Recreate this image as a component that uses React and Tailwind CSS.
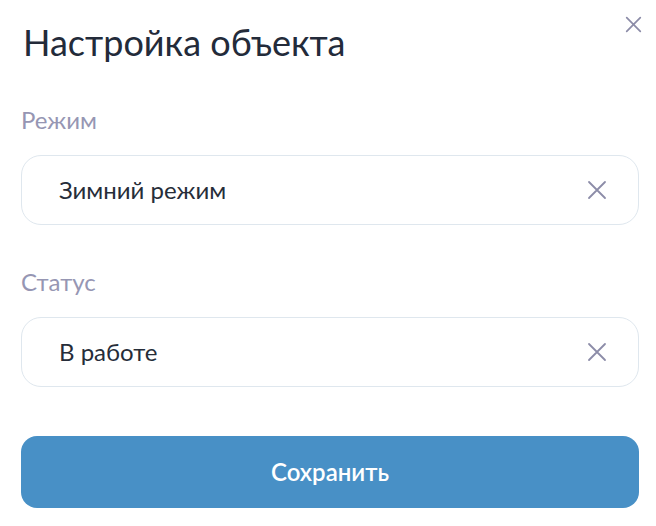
function Cross({ size, className, width = 2 }) {
  return (
    <svg width={size} height={size} viewBox="0 0 20 20" fill="none" className={className}>
      <path d="M2 2L18 18M18 2L2 18" stroke="currentColor" strokeWidth={width} strokeLinecap="round" />
    </svg>
  );
}

function Field({ label, value }) {
  return (
    <div className="flex flex-col">
      <label className="text-[24px] leading-none text-[#9696b3] mb-[23px]">{label}</label>
      <div className="flex items-center justify-between h-[70px] rounded-[20px] border border-[#dfe7ee] bg-white pl-[37px] pr-[31px]">
        <span className="text-[24px] leading-none text-[#262d39]">{value}</span>
        <Cross size={20} width={1.8} className="text-[#8c8ca8]" />
      </div>
    </div>
  );
}

export default function App() {
  return (
    <div
      className="relative bg-white w-[656px] h-[526px] pl-[21px] pr-[17px] pt-[20px]"
      style={{ fontFamily: "Lato, 'Noto Sans', sans-serif" }}
    >
      <button className="absolute right-[14px] top-[16px] text-[#8c8ca8]">
        <Cross size={17} />
      </button>
      <h1 className="text-[36px] leading-[44px] text-[#232b3a] ml-[2px]">Настройка объекта</h1>
      <div className="mt-[44px] flex flex-col gap-[45px]">
        <Field label="Режим" value="Зимний режим" />
        <Field label="Статус" value="В работе" />
      </div>
      <button className="mt-[49px] w-full h-[72px] rounded-[16px] bg-[#4890c6] text-white text-[24px] font-semibold">
        Сохранить
      </button>
    </div>
  );
}
